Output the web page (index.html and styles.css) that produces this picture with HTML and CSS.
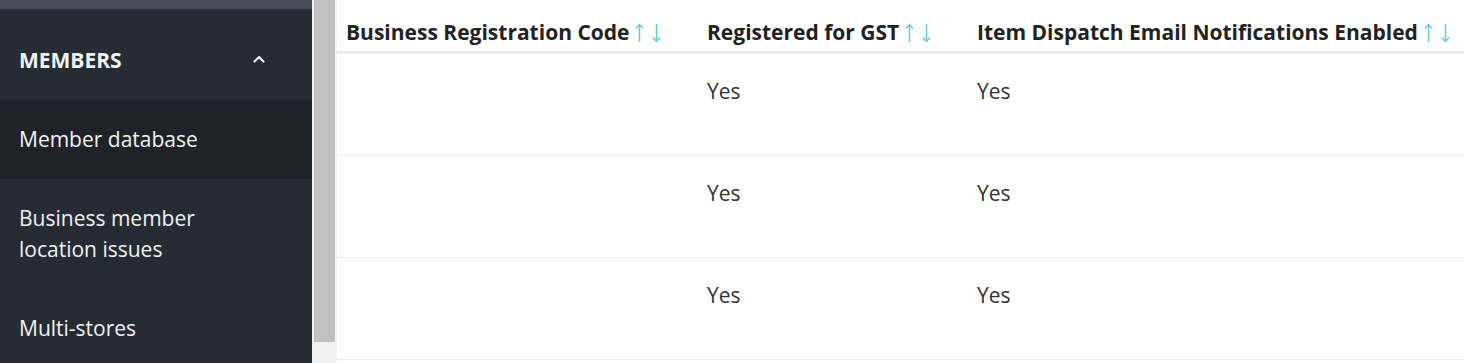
FILE: index.html
```html
<!DOCTYPE html>
<html lang="en">
<head>
<meta charset="utf-8">
<title>Members</title>
<link rel="stylesheet" href="styles.css">
</head>
<body>
<div class="app">
  <aside class="sidebar">
    <div class="topband"></div>
    <div class="section-head">
      <span class="section-title">MEMBERS</span>
      <svg class="chev" width="12" height="8" viewBox="0 0 12 8"><path d="M1.5 6.5 L6 2 L10.5 6.5" fill="none" stroke="#f2f2f2" stroke-width="2.2" stroke-linecap="round" stroke-linejoin="round"/></svg>
    </div>
    <a class="nav-item active">Member database</a>
    <a class="nav-item">Business member<br>location issues</a>
    <a class="nav-item">Multi-stores</a>
  </aside>
  <div class="scrollbar"><div class="thumb"></div></div>
  <main class="content">
    <table class="grid">
      <colgroup><col class="c1"><col class="c2"><col class="c3"></colgroup>
      <thead>
        <tr>
          <th>Business Registration Code<span class="sort"><svg width="9" height="20" viewBox="0 0 9 20"><path d="M4.5 1.5 V19 M1 5.5 L4.5 1.5 L8 5.5" fill="none" stroke="#5ccbdc" stroke-width="1.4"/></svg><svg width="9" height="20" viewBox="0 0 9 20"><path d="M4.5 1 V18.5 M1 14.5 L4.5 18.5 L8 14.5" fill="none" stroke="#5ccbdc" stroke-width="1.4"/></svg></span></th>
          <th>Registered for GST<span class="sort"><svg width="9" height="20" viewBox="0 0 9 20"><path d="M4.5 1.5 V19 M1 5.5 L4.5 1.5 L8 5.5" fill="none" stroke="#5ccbdc" stroke-width="1.4"/></svg><svg width="9" height="20" viewBox="0 0 9 20"><path d="M4.5 1 V18.5 M1 14.5 L4.5 18.5 L8 14.5" fill="none" stroke="#5ccbdc" stroke-width="1.4"/></svg></span></th>
          <th>Item Dispatch Email Notifications Enabled<span class="sort"><svg width="9" height="20" viewBox="0 0 9 20"><path d="M4.5 1.5 V19 M1 5.5 L4.5 1.5 L8 5.5" fill="none" stroke="#5ccbdc" stroke-width="1.4"/></svg><svg width="9" height="20" viewBox="0 0 9 20"><path d="M4.5 1 V18.5 M1 14.5 L4.5 18.5 L8 14.5" fill="none" stroke="#5ccbdc" stroke-width="1.4"/></svg></span></th>
        </tr>
      </thead>
      <tbody>
        <tr><td></td><td>Yes</td><td>Yes</td></tr>
        <tr><td></td><td>Yes</td><td>Yes</td></tr>
        <tr><td></td><td>Yes</td><td>Yes</td></tr>
      </tbody>
    </table>
  </main>
</div>
</body>
</html>
```

FILE: styles.css
```css
* { box-sizing: border-box; }
html, body { margin: 0; padding: 0; height: 100%; overflow: hidden; background: #fff; }
body { font-family: "Open Sans", "Liberation Sans", sans-serif; }

.app { display: flex; height: 363px; overflow: hidden; }

.sidebar {
  width: 312px;
  flex: 0 0 312px;
  background: #262c33;
  color: #f2f2f2;
  display: flex;
  flex-direction: column;
  overflow: hidden;
}
.sidebar > * { flex-shrink: 0; }
.topband { height: 9px; background: #454c55; }
.section-head {
  display: flex;
  align-items: center;
  justify-content: space-between;
  padding: 36px 47px 25px 19px;
  height: 91px;
}
.section-title { font-size: 21px; font-weight: 700; line-height: 30px; }
.chev { display: block; margin-top: -2px; }

.nav-item {
  display: block;
  padding: 24px 19px 24px;
  font-size: 21px;
  line-height: 31px;
  color: #f2f2f2;
}
.nav-item.active { background: #1f2329; }

.scrollbar {
  width: 25px;
  flex: 0 0 25px;
  background: #f1f1f1;
  padding: 0 2px;
}
.thumb { height: 342px; background: #c1c1c1; }

.content { flex: 1; overflow: hidden; }

.grid {
  border-collapse: collapse;
  table-layout: fixed;
  width: 1200px;
}
.c1 { width: 361px; }
.c2 { width: 270px; }
.c3 { width: 569px; }

.grid th {
  text-align: left;
  font-size: 21px;
  font-weight: 700;
  color: #222;
  line-height: 28px;
  padding: 18px 9px 5px;
  border-bottom: 3px solid #ececec;
  white-space: nowrap;
}
.sort { display: inline-flex; gap: 8px; margin-left: 6px; vertical-align: -3px; }
.sort svg { display: block; }

.grid td {
  font-size: 21px;
  color: #333;
  line-height: 30px;
  padding: 22px 9px 49px;
  border-bottom: 1px solid #ececec;
  vertical-align: top;
}
```
